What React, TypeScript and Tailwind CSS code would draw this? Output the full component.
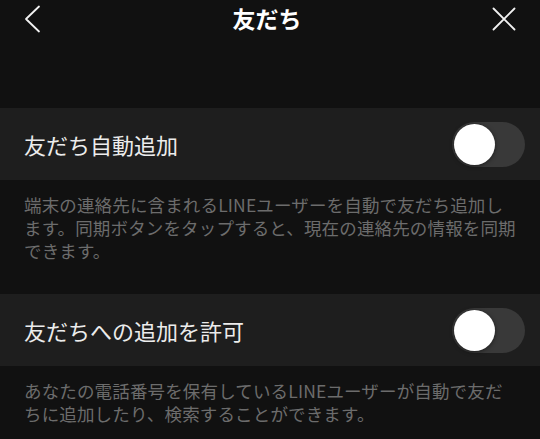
const sections = [
  {
    label: "友だち自動追加",
    lines: [
      "端末の連絡先に含まれるLINEユーザーを自動で友だち追加し",
      "ます。同期ボタンをタップすると、現在の連絡先の情報を同期",
      "できます。",
    ],
  },
  {
    label: "友だちへの追加を許可",
    lines: [
      "あなたの電話番号を保有しているLINEユーザーが自動で友だ",
      "ちに追加したり、検索することができます。",
    ],
  },
];

function Toggle() {
  return (
    <div className="w-[73px] h-[45px] rounded-full bg-[#393939] p-[2px] flex items-center">
      <div className="w-[41px] h-[41px] rounded-full bg-white shadow-[0_1px_4px_rgba(0,0,0,0.5)]" />
    </div>
  );
}

export default function App() {
  return (
    <div
      className="w-[540px] h-[439px] bg-[#111111] overflow-hidden"
      style={{ fontFamily: '"Noto Sans CJK JP", "Noto Sans", sans-serif' }}
    >
      <header className="h-[36px] flex items-center justify-between pl-[24px] pr-[24px] pt-[1px]">
        <svg width="18" height="28" viewBox="0 0 18 28" fill="none" stroke="#f2f2f2" strokeWidth="1.8" strokeLinecap="round" strokeLinejoin="round">
          <path d="M15 1.5 L2 14 L15 26.5" />
        </svg>
        <h1 className="text-[23px] font-bold text-white leading-none">友だち</h1>
        <svg width="24" height="24" viewBox="0 0 24 24" fill="none" stroke="#f2f2f2" strokeWidth="1.8" strokeLinecap="round">
          <path d="M1.5 1.5 L22.5 22.5 M22.5 1.5 L1.5 22.5" />
        </svg>
      </header>

      <div className="pt-[72px] flex flex-col gap-[32px]">
        {sections.map((s) => (
          <section key={s.label}>
            <div className="h-[72px] bg-[#1e1e1e] flex items-center justify-between pl-[24px] pr-[15px]">
              <span className="text-[22px] text-[#ececec] leading-none">{s.label}</span>
              <Toggle />
            </div>
            <p className="pt-[13px] px-[24px] text-[17.5px] leading-[23px] tracking-[0.15px] text-[#6c6c6c] whitespace-nowrap">
              {s.lines.map((l) => (
                <span key={l} className="block">
                  {l}
                </span>
              ))}
            </p>
          </section>
        ))}
      </div>
    </div>
  );
}
